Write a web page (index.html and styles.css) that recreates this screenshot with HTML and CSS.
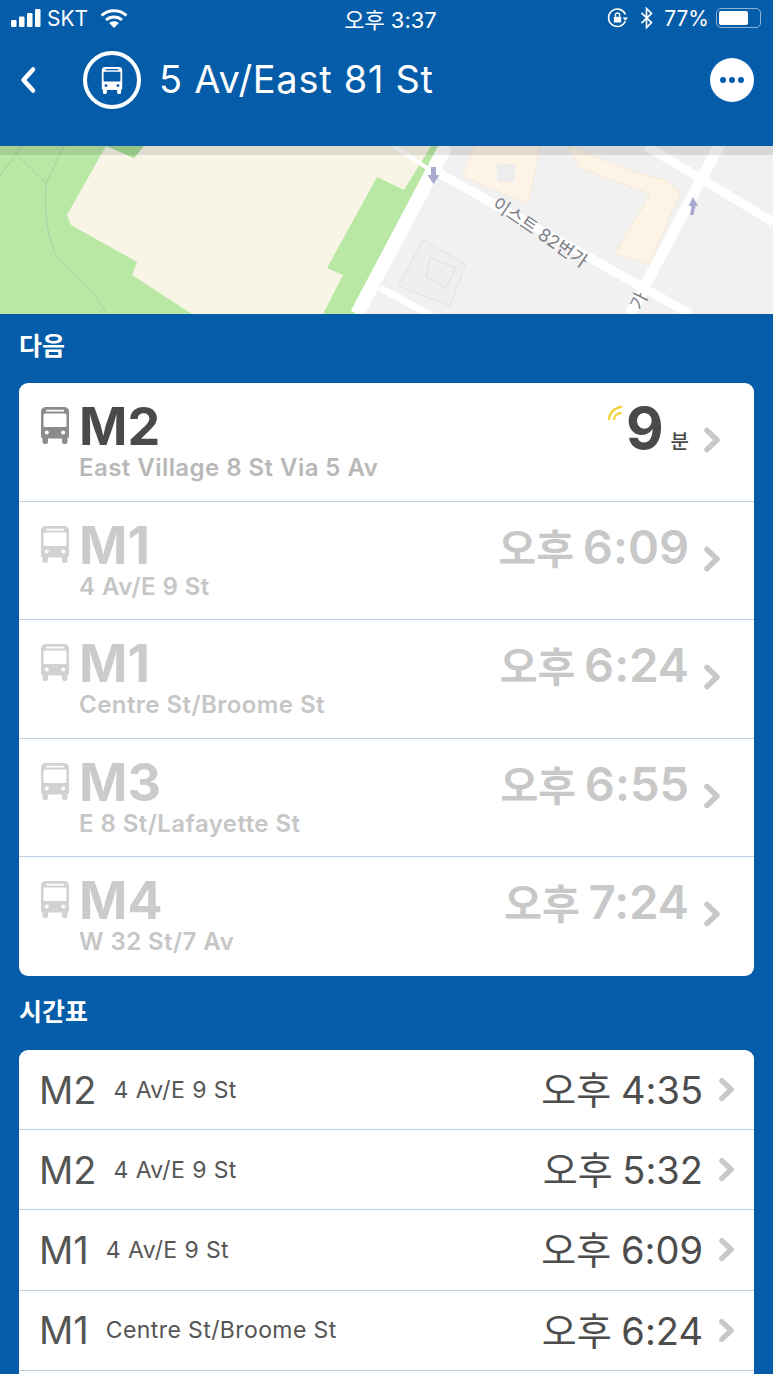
FILE: index.html
```html
<!DOCTYPE html>
<html lang="ko">
<head>
<meta charset="utf-8">
<title>5 Av/East 81 St</title>
<link rel="stylesheet" href="styles.css">
</head>
<body>
<svg class="defs" width="0" height="0" aria-hidden="true">
  <defs>
    <symbol id="bus" viewBox="0 0 30 37">
      <path fill="currentColor" d="M6 0h18c3 0 5 1.500 5 4.500V29c0 1.200-.6 2-1.500 2.300V35c0 1.300-.9 2-2 2h-1.500c-1.100 0-2-.7-2-2v-3.500H8V35c0 1.300-.9 2-2 2H4.500c-1.100 0-2-.7-2-2v-3.700C1.600 31 1 30.200 1 29V4.500C1 1.500 3 0 6 0z"/>
      <rect class="bus-hole" x="3.500" y="6.500" width="23" height="13.500" rx="1.500"/>
      <rect class="bus-hole" x="6" y="2.800" width="18" height="1.800" rx=".9"/>
      <circle class="bus-hole" cx="6.800" cy="25.500" r="2"/>
      <circle class="bus-hole" cx="23.200" cy="25.500" r="2"/>
    </symbol>
    <symbol id="chev" viewBox="0 0 18 26">
      <path fill="none" stroke="currentColor" stroke-width="5.500" stroke-linecap="round" stroke-linejoin="round" d="M4 3.500l10 9.500-10 9.500"/>
    </symbol>
  </defs>
</svg>

<header class="top">
  <div class="status">
    <div class="status-left">
      <svg class="signal" viewBox="0 0 30 18"><rect x="0" y="11" width="5.500" height="7" rx="1.200"/><rect x="8" y="7.500" width="5.500" height="10.500" rx="1.200"/><rect x="16" y="4" width="5.500" height="14" rx="1.200"/><rect x="24" y="0" width="5.500" height="18" rx="1.200"/></svg>
      <span class="carrier">SKT</span>
      <svg class="wifi" viewBox="0 0 28 20"><path fill="none" stroke="#fff" stroke-width="3" d="M1.500 7.500C8.500 1 19.500 1 26.500 7.500M6 12c4.500-4 11.500-4 16 0"/><path fill="#fff" d="M14 20l-4.800-5c2.800-2.200 6.800-2.200 9.600 0z"/></svg>
    </div>
    <div class="clock">오후 3:37</div>
    <div class="status-right">
      <svg class="lock" viewBox="0 0 24 24"><path fill="none" stroke="#fff" stroke-width="1.800" d="M20 15.500A9.500 9.500 0 1 1 20 8"/><path fill="#fff" d="M17 11.500h6l-3 3.500z"/><rect x="7.500" y="10.500" width="8" height="6.500" rx="1" fill="#fff"/><path fill="none" stroke="#fff" stroke-width="1.500" d="M9.200 10.500V8.800a2.300 2.300 0 0 1 4.600 0v1.700"/></svg>
      <svg class="bt" viewBox="0 0 14 24"><path fill="none" stroke="#fff" stroke-width="1.800" d="M1.500 6.500l11 10.500-5.500 5.500V1.500l5.500 5.500-11 10.500"/></svg>
      <span class="battery-text">77%</span>
      <div class="battery"><div class="battery-fill"></div></div>
    </div>
  </div>
  <div class="nav">
    <svg class="back" viewBox="0 0 18 28"><path fill="none" stroke="#fff" stroke-width="4.500" stroke-linecap="round" stroke-linejoin="round" d="M14 3.500L4.500 14l9.500 10.500"/></svg>
    <div class="stop-badge"><svg class="stop-bus"><use href="#bus"/></svg></div>
    <h1 class="title">5 Av/East 81 St</h1>
    <div class="more"><i></i><i></i><i></i></div>
  </div>
</header>

<svg class="map" viewBox="0 0 773 168" role="img" aria-label="지도">
  <rect width="773" height="168" fill="#b9e8a5"/>
  <polygon fill="#f8f5e6" points="106,0 67,69 71,79 137,116 132,129 192,168 323,168 343,129 327,122 377,31 404,44 431,0"/>
  <polygon fill="#f1f1f2" points="446,0 357,168 773,168 773,0"/>
  <polygon fill="#a6dc93" points="106,0 144,0 134,12"/>
  <g fill="none" stroke="#a5cfa6" stroke-width="1">
    <path d="M0 30L22 0M14 6L46 37M46 37L64 0M46 37C44 70 48 96 58 112C80 134 98 148 106 168"/>
  </g>
  <g fill="#fdf4e6" stroke="#f6e8d4" stroke-width="1">
    <polygon points="475,0 540,0 528,58 462,30"/>
    <polygon points="568,0 640,28 664,34 680,46 650,118 615,108 650,48 580,22"/>
  </g>
  <rect x="497" y="18" width="18" height="18" fill="#ededee"/>
  <polygon fill="#efeff0" stroke="#e2e2e3" points="423,94 466,118 450,160 398,140"/>
  <polygon fill="none" stroke="#dfdfe0" points="430,112 456,122 446,142 426,130"/>
  <g fill="none" stroke="#fff" stroke-linecap="butt">
    <path stroke-width="14" d="M446 0L357 168"/>
    <path stroke-width="11" d="M720 -2L630 168"/>
    <path stroke-width="9" d="M430 22L690 168"/>
    <path stroke-width="4" d="M394 0L430 24"/>
    <path stroke-width="9" d="M646 0L773 76"/>
    <path stroke-width="7" d="M380 142L432 170"/>
  </g>
  <g fill="#a9a9cf">
    <path d="M431 21h5v8h3.500l-6 9-6-9h3.500z"/>
    <path d="M693 51l5 9h-2.500l-2 9h-3.500l1.500-9h-3z"/>
  </g>
  <text class="map-label" transform="translate(491 61) rotate(34)">이스트 82번가</text>
  <text class="map-label" transform="translate(641 165) rotate(-64)">가</text>
  <rect width="773" height="9" fill="#000" opacity=".1"/>
</svg>

<main class="content">
  <h2 class="section">다음</h2>
  <section class="card">
    <a class="next-row">
      <svg class="bus-icon"><use href="#bus"/></svg>
      <div class="route"><div class="route-no dark-text">M2</div><div class="route-to">East Village 8 St Via 5 Av</div></div>
      <div class="eta">
        <svg class="live" viewBox="0 0 18 18"><path fill="none" stroke="#f2d43d" stroke-width="2.400" stroke-linecap="round" d="M2 15C2.500 8.500 8 3 15 2M7.500 15C8 11.500 11 9 14.500 8.500"/></svg>
        <span class="eta-num">9</span><span class="eta-unit">분</span>
      </div>
      <svg class="chev"><use href="#chev"/></svg>
    </a>
    <a class="next-row faded">
      <svg class="bus-icon"><use href="#bus"/></svg>
      <div class="route"><div class="route-no">M1</div><div class="route-to">4 Av/E 9 St</div></div>
      <div class="eta-time"><span class="ko">오후</span> 6:09</div>
      <svg class="chev"><use href="#chev"/></svg>
    </a>
    <a class="next-row faded">
      <svg class="bus-icon"><use href="#bus"/></svg>
      <div class="route"><div class="route-no">M1</div><div class="route-to">Centre St/Broome St</div></div>
      <div class="eta-time"><span class="ko">오후</span> 6:24</div>
      <svg class="chev"><use href="#chev"/></svg>
    </a>
    <a class="next-row faded">
      <svg class="bus-icon"><use href="#bus"/></svg>
      <div class="route"><div class="route-no">M3</div><div class="route-to">E 8 St/Lafayette St</div></div>
      <div class="eta-time"><span class="ko">오후</span> 6:55</div>
      <svg class="chev"><use href="#chev"/></svg>
    </a>
    <a class="next-row faded">
      <svg class="bus-icon"><use href="#bus"/></svg>
      <div class="route"><div class="route-no">M4</div><div class="route-to">W 32 St/7 Av</div></div>
      <div class="eta-time"><span class="ko">오후</span> 7:24</div>
      <svg class="chev"><use href="#chev"/></svg>
    </a>
  </section>

  <h2 class="section section-second">시간표</h2>
  <section class="card">
    <a class="sched-row"><span class="s-route">M2</span><span class="s-to">4 Av/E 9 St</span><span class="s-time">오후 4:35</span><svg class="s-chev"><use href="#chev"/></svg></a>
    <a class="sched-row"><span class="s-route">M2</span><span class="s-to">4 Av/E 9 St</span><span class="s-time">오후 5:32</span><svg class="s-chev"><use href="#chev"/></svg></a>
    <a class="sched-row"><span class="s-route">M1</span><span class="s-to">4 Av/E 9 St</span><span class="s-time">오후 6:09</span><svg class="s-chev"><use href="#chev"/></svg></a>
    <a class="sched-row"><span class="s-route">M1</span><span class="s-to">Centre St/Broome St</span><span class="s-time">오후 6:24</span><svg class="s-chev"><use href="#chev"/></svg></a>
    <div class="sched-tail"></div>
  </section>
</main>
</body>
</html>
```

FILE: styles.css
```css
* { box-sizing: border-box; }
html, body { margin: 0; height: 1374px; overflow: hidden; }
body {
  background: #055ca8;
  font-family: Inter, "Noto Sans CJK KR", sans-serif;
  color: #fff;
}
.defs { display: block; height: 0; }
.bus-hole { fill: var(--hole, #fff); }

.top { height: 146px; }
.status {
  height: 36px;
  display: grid;
  grid-template-columns: 1fr auto 1fr;
  align-items: center;
  padding: 0 12px 0 11px;
  font-size: 21px;
}
.status-left { display: flex; align-items: center; }
.signal { width: 30px; height: 18px; fill: #fff; }
.carrier { margin-left: 6px; }
.wifi { width: 28px; height: 20px; margin-left: 12px; }
.clock { text-align: center; font-size: 22px; padding-left: 9px; }
.status-right { display: flex; align-items: center; justify-content: flex-end; }
.lock { width: 22px; height: 22px; }
.bt { width: 13px; height: 22px; margin-left: 11px; }
.battery-text { margin-left: 11px; }
.battery {
  width: 45px; height: 20px; margin-left: 7px; padding: 2px;
  border: 1.500px solid #8db4d8; border-radius: 5px;
}
.battery-fill { width: 75%; height: 100%; background: #fff; border-radius: 2px; }

.nav { display: flex; align-items: center; height: 88px; padding: 0 19px; }
.back { width: 18px; height: 28px; }
.stop-badge {
  width: 58px; height: 58px; margin-left: 46px;
  border: 4px solid #fff; border-radius: 50%;
  display: flex; align-items: center; justify-content: center;
}
.stop-bus { width: 22px; height: 27px; color: #fff; --hole: #055ca8; }
.title {
  margin: -3px 0 0 18px; flex: 1;
  font-size: 38px; font-weight: 400; letter-spacing: .7px;
}
.more {
  width: 44px; height: 44px; border-radius: 50%; background: #fff;
  display: flex; align-items: center; justify-content: center; gap: 3px;
}
.more i { width: 6px; height: 6px; border-radius: 50%; background: #055ca8; }

.map { display: block; width: 773px; height: 168px; }
.map-label { font-size: 18px; fill: #7d7d84; }

.content { padding: 0 19px; }
.section { margin: 0; height: 69px; padding-top: 14px; font-size: 25px; line-height: 36px; font-weight: 700; }
.section-second { height: 74px; padding-top: 18px; }

.card { background: #fff; border-radius: 9px; overflow: hidden; color: #555; }

.next-row {
  display: flex; align-items: flex-start;
  height: 118.600px; padding: 22px 33px 0 21px;
  border-bottom: 1px solid #bcd0e2;
}
.next-row:last-child { border-bottom: 0; }
.bus-icon { width: 30px; height: 37px; margin-top: 2px; color: #8c8c8c; flex: none; }
.route { margin-left: 9px; flex: 1; }
.route-no { font-size: 52px; line-height: 44px; font-weight: 700; color: #cbcbcb; }
.route-no.dark-text { color: #4a4a4a; }
.route-to { font-size: 24px; line-height: 32px; font-weight: 600; letter-spacing: .45px; color: #b8b8b8; margin-top: 3px; }
.faded .bus-icon { color: #d2d2d2; }
.faded .route-to { color: #c6c6c6; }

.eta { display: flex; align-items: baseline; margin-top: -2px; }
.live { width: 17px; height: 17px; align-self: flex-start; margin-top: 2px; }
.eta-num { font-size: 58px; line-height: 50px; font-weight: 700; color: #4a4a4a; margin-left: 2px; }
.eta-unit { font-size: 20px; font-weight: 500; margin-left: 7px; color: #4a4a4a; }
.eta-time { font-size: 47px; line-height: 50px; font-weight: 600; word-spacing: -3px; color: #c8c8c8; margin-top: -2px; }
.ko { font-size: 41px; font-weight: 600; }
.chev { width: 18px; height: 26px; margin: 22px 0 0 14px; color: #c8c8c8; flex: none; }

.sched-row {
  display: flex; align-items: center;
  height: 80.200px; padding: 0 19px 0 20px;
  border-bottom: 1px solid #bcd0e2;
}
.s-route { font-size: 38px; color: #555; }
.s-to { font-size: 23px; letter-spacing: .4px; margin-left: 17px; flex: 1; color: #555; }
.s-time { font-size: 38px; padding-bottom: 4px; word-spacing: -1px; color: #4d4d4d; }
.s-chev { width: 17px; height: 25px; margin-left: 15px; color: #c8c8c8; }
.sched-tail { height: 20px; }
```
